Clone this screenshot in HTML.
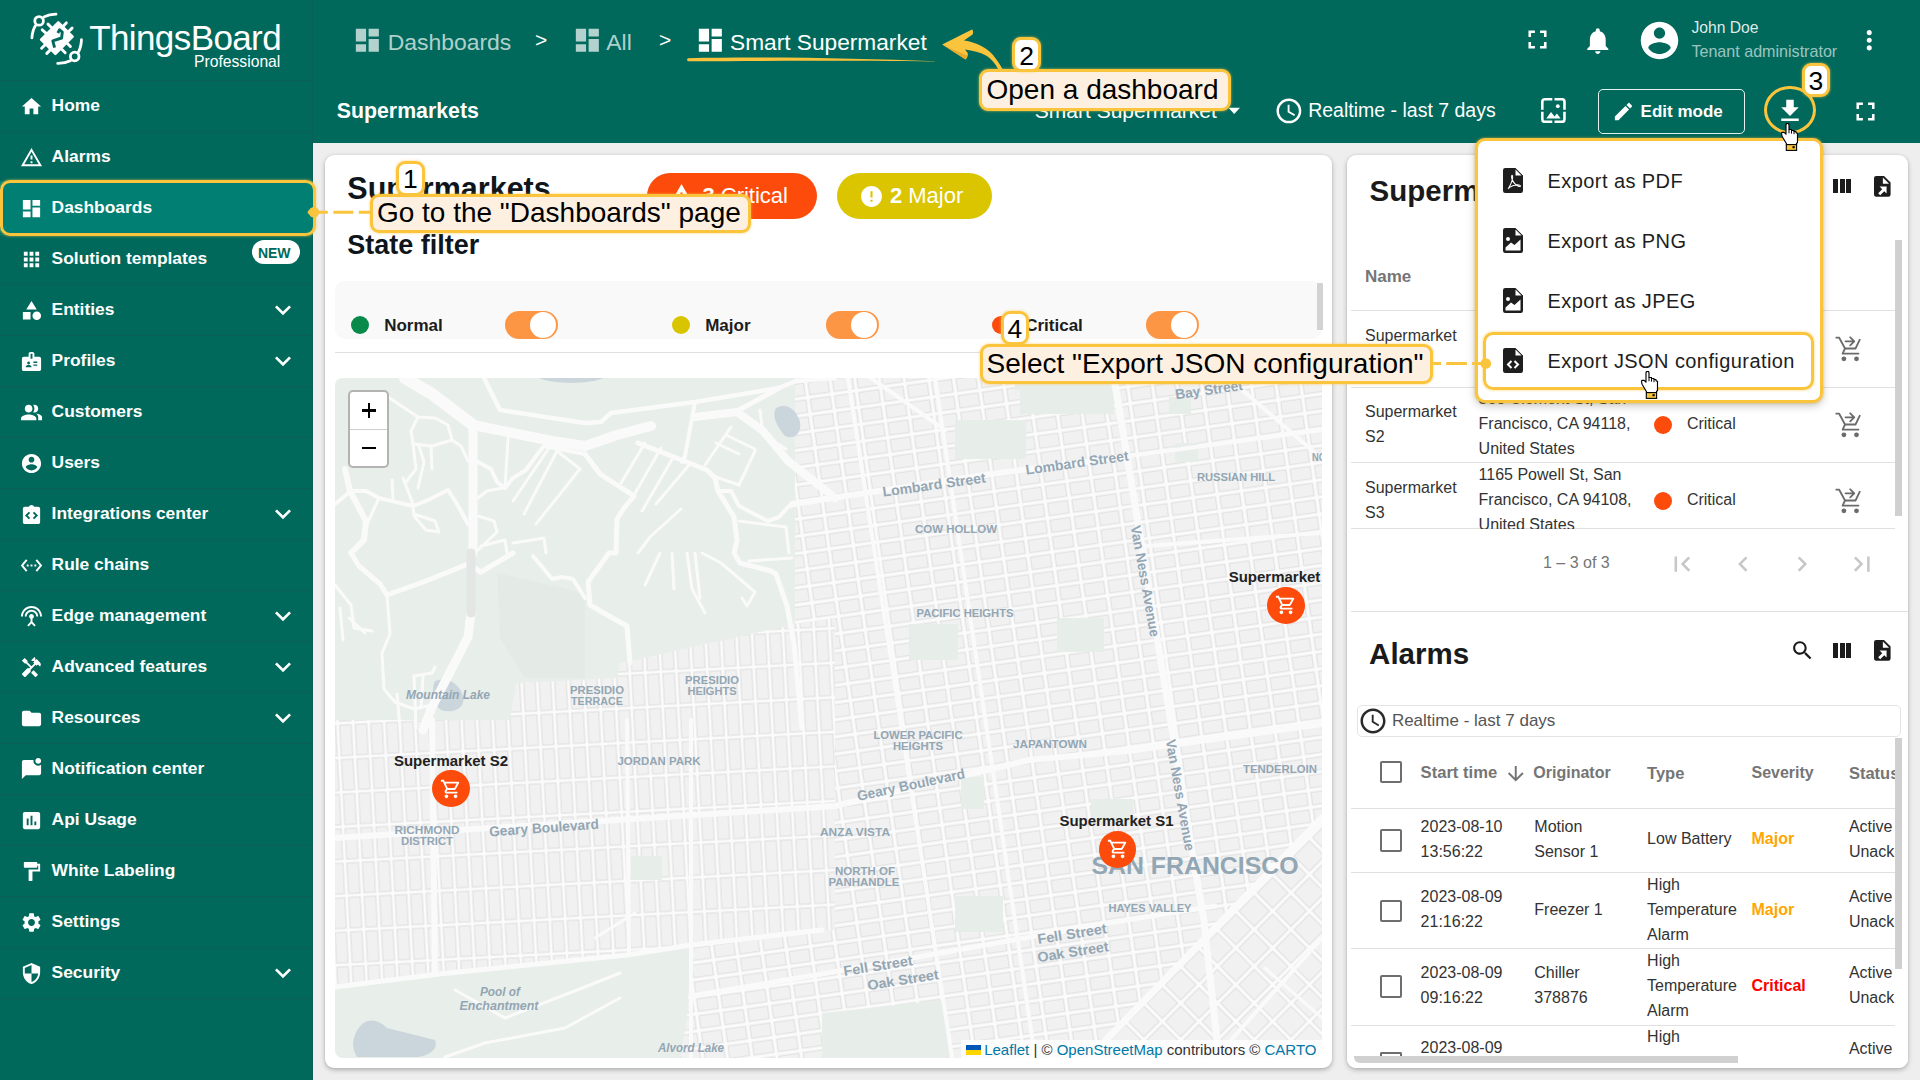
<!DOCTYPE html>
<html><head><meta charset="utf-8">
<style>
*{box-sizing:border-box;margin:0;padding:0}
html,body{width:1920px;height:1080px;overflow:hidden;background:#eeeeee;font-family:"Liberation Sans",sans-serif;position:relative}
.abs{position:absolute}
</style></head><body>

<div class="abs" style="left:0;top:0;width:313px;height:1080px;background:#00695c"></div>
<div class="abs" style="left:312px;top:0;width:1px;height:1080px;background:#0b5f55"></div>
<svg class="abs" style="left:20px;top:5px;width:70px;height:70px" viewBox="0 0 70 70">
<g fill="none" stroke="#fff" stroke-width="2.8" stroke-linecap="round">
<path d="M11.9 32.9 Q12.5 25 15.5 20.6"/><path d="M24.3 11.8 Q29 9.5 36 9.2"/>
<path d="M61.5 34.6 Q61 42.5 58.3 47.4"/><path d="M50.4 55.8 Q45 58.5 37.7 58.4"/>
<circle cx="19.1" cy="15.9" r="4.3"/><circle cx="54.7" cy="51.5" r="4.3"/>
<path d="M28 19.1L31.4 22.5M22.2 24.8L26.2 28.3M46.3 17.9L42.9 21.4M52.1 23.1L48.6 26.5M21.6 43.2L25.1 39.7M26.8 48.4L30.3 44.9M50.4 41.5L46.9 38M45.2 47.8L41.7 44.3" stroke-width="2.9"/>
</g>
<path d="M38.3 17.4L52.6 31.7L35.4 48.9L21.1 34.6Z" fill="#fff" stroke="#fff" stroke-width="2.5" stroke-linejoin="round"/>
<path d="M37.8 28L39.6 24.8L42.3 27L41.6 33L32.8 35.9L34.6 42.6" fill="none" stroke="#00695c" stroke-width="2.9" stroke-linejoin="round"/>
</svg>
<div class="abs" style="left:89.2px;top:19.9px;font-size:35px;line-height:35px;color:#fff;letter-spacing:-0.6px">ThingsBoard</div>
<div class="abs" style="left:194px;top:54.1px;font-size:15.7px;line-height:15.7px;color:#fff">Professional</div>

<div class="abs" style="left:0;top:80px;width:312px;height:1px;background:#0c5f55"></div>
<svg class="abs" style="left:20px;top:94.5px;width:23px;height:23px" viewBox="0 0 24 24"><path fill="#fff" fill-rule="nonzero" d="M10 20v-6h4v6h5v-8h3L12 3 2 12h3v8z"/></svg>
<div class="abs" style="left:51.60px;top:97.37px;font-size:17.4px;line-height:17.4px;color:#fff;font-weight:bold;white-space:nowrap;">Home</div>
<div class="abs" style="left:0;top:131px;width:312px;height:1px;background:#0c5f55"></div>
<svg class="abs" style="left:20px;top:145.5px;width:23px;height:23px" viewBox="0 0 24 24"><path fill="#fff" fill-rule="nonzero" d="M12 5.99L19.53 19H4.47L12 5.99M12 2L1 21h22L12 2zm1 14h-2v2h2v-2zm0-6h-2v4h2v-4z"/></svg>
<div class="abs" style="left:51.60px;top:148.37px;font-size:17.4px;line-height:17.4px;color:#fff;font-weight:bold;white-space:nowrap;">Alarms</div>
<div class="abs" style="left:0;top:182px;width:312px;height:1px;background:#0c5f55"></div>
<div class="abs" style="left:0;top:181px;width:313px;height:54px;background:#007f72"></div>
<svg class="abs" style="left:20px;top:196.5px;width:23px;height:23px" viewBox="0 0 24 24"><path fill="#fff" fill-rule="nonzero" d="M3 13h8V3H3v10zm0 8h8v-6H3v6zm10 0h8V11h-8v10zm0-18v6h8V3h-8z"/></svg>
<div class="abs" style="left:51.60px;top:199.37px;font-size:17.4px;line-height:17.4px;color:#fff;font-weight:bold;white-space:nowrap;">Dashboards</div>
<div class="abs" style="left:0;top:233px;width:312px;height:1px;background:#0c5f55"></div>
<svg class="abs" style="left:20px;top:247.5px;width:23px;height:23px" viewBox="0 0 24 24"><path fill="#fff" fill-rule="nonzero" d="M4 8h4V4H4v4zm6 12h4v-4h-4v4zm-6 0h4v-4H4v4zm0-6h4v-4H4v4zm6 0h4v-4h-4v4zm6-10v4h4V4h-4zm-6 4h4V4h-4v4zm6 6h4v-4h-4v4zm0 6h4v-4h-4v4z"/></svg>
<div class="abs" style="left:51.60px;top:250.37px;font-size:17.4px;line-height:17.4px;color:#fff;font-weight:bold;white-space:nowrap;">Solution templates</div>
<div class="abs" style="left:0;top:284px;width:312px;height:1px;background:#0c5f55"></div>
<svg class="abs" style="left:20px;top:298.5px;width:23px;height:23px" viewBox="0 0 24 24"><path fill="#fff" fill-rule="nonzero" d="M12 2l-5.5 9h11zM17.5 13a4.5 4.5 0 1 0 0 9a4.5 4.5 0 1 0 0-9zM3 13.5h8v8H3z"/></svg>
<div class="abs" style="left:51.60px;top:301.37px;font-size:17.4px;line-height:17.4px;color:#fff;font-weight:bold;white-space:nowrap;">Entities</div>
<svg class="abs" style="left:266.6px;top:293.5px;width:32px;height:32px" viewBox="0 0 24 24"><path fill="#fff" fill-rule="nonzero" d="M16.59 8.59L12 13.17 7.41 8.59 6 10l6 6 6-6z"/></svg>
<div class="abs" style="left:0;top:335px;width:312px;height:1px;background:#0c5f55"></div>
<svg class="abs" style="left:20px;top:349.5px;width:23px;height:23px" viewBox="0 0 24 24"><path fill="#fff" fill-rule="nonzero" d="M20 7h-5V4c0-1.1-.9-2-2-2h-2c-1.1 0-2 .9-2 2v3H4c-1.1 0-2 .9-2 2v11c0 1.1.9 2 2 2h16c1.1 0 2-.9 2-2V9c0-1.1-.9-2-2-2zM9 12c.83 0 1.5.67 1.5 1.5S9.83 15 9 15s-1.5-.67-1.5-1.5S8.17 12 9 12zm3 6H6v-.43c0-.6.36-1.15.92-1.39.64-.28 1.34-.43 2.08-.43s1.44.15 2.08.43c.55.24.92.78.92 1.39V18zm1-9h-2V4h2v5zm5 7.5h-4V15h4v1.5zm0-3h-4V12h4v1.5z"/></svg>
<div class="abs" style="left:51.60px;top:352.37px;font-size:17.4px;line-height:17.4px;color:#fff;font-weight:bold;white-space:nowrap;">Profiles</div>
<svg class="abs" style="left:266.6px;top:344.5px;width:32px;height:32px" viewBox="0 0 24 24"><path fill="#fff" fill-rule="nonzero" d="M16.59 8.59L12 13.17 7.41 8.59 6 10l6 6 6-6z"/></svg>
<div class="abs" style="left:0;top:386px;width:312px;height:1px;background:#0c5f55"></div>
<svg class="abs" style="left:20px;top:400.5px;width:23px;height:23px" viewBox="0 0 24 24"><path fill="#fff" fill-rule="nonzero" d="M16.67 13.13C18.04 14.06 19 15.32 19 17v3h4v-3c0-2.18-3.57-3.47-6.33-3.87zM15 12c2.21 0 4-1.79 4-4s-1.79-4-4-4c-.47 0-.91.1-1.33.24C14.5 5.27 15 6.58 15 8s-.5 2.73-1.33 3.76c.42.14.86.24 1.33.24zm-6 0c2.21 0 4-1.79 4-4s-1.79-4-4-4-4 1.79-4 4 1.79 4 4 4zm0 2c-2.67 0-8 1.34-8 4v2h16v-2c0-2.66-5.33-4-8-4z"/></svg>
<div class="abs" style="left:51.60px;top:403.37px;font-size:17.4px;line-height:17.4px;color:#fff;font-weight:bold;white-space:nowrap;">Customers</div>
<div class="abs" style="left:0;top:437px;width:312px;height:1px;background:#0c5f55"></div>
<svg class="abs" style="left:20px;top:451.5px;width:23px;height:23px" viewBox="0 0 24 24"><path fill="#fff" fill-rule="nonzero" d="M12 2C6.48 2 2 6.48 2 12s4.48 10 10 10 10-4.48 10-10S17.52 2 12 2zm0 3c1.66 0 3 1.34 3 3s-1.34 3-3 3-3-1.34-3-3 1.34-3 3-3zm0 14.2c-2.5 0-4.71-1.28-6-3.22.03-1.99 4-3.08 6-3.08 1.99 0 5.97 1.09 6 3.08-1.29 1.94-3.5 3.22-6 3.22z"/></svg>
<div class="abs" style="left:51.60px;top:454.37px;font-size:17.4px;line-height:17.4px;color:#fff;font-weight:bold;white-space:nowrap;">Users</div>
<div class="abs" style="left:0;top:488px;width:312px;height:1px;background:#0c5f55"></div>
<svg class="abs" style="left:20px;top:502.5px;width:23px;height:23px" viewBox="0 0 24 24"><path fill="#fff" fill-rule="nonzero" d="M19 4h-4.18C14.4 2.84 13.3 2 12 2s-2.4.84-2.82 2H5c-1.1 0-2 .9-2 2v14c0 1.1.9 2 2 2h14c1.1 0 2-.9 2-2V6c0-1.1-.9-2-2-2zM10.6 15.6L9.2 17l-4-4 4-4 1.4 1.4L8 13l2.6 2.6zm4.2 1.4l-1.4-1.4L16 13l-2.6-2.6L14.8 9l4 4-4 4z"/></svg>
<div class="abs" style="left:51.60px;top:505.37px;font-size:17.4px;line-height:17.4px;color:#fff;font-weight:bold;white-space:nowrap;">Integrations center</div>
<svg class="abs" style="left:266.6px;top:497.5px;width:32px;height:32px" viewBox="0 0 24 24"><path fill="#fff" fill-rule="nonzero" d="M16.59 8.59L12 13.17 7.41 8.59 6 10l6 6 6-6z"/></svg>
<div class="abs" style="left:0;top:539px;width:312px;height:1px;background:#0c5f55"></div>
<svg class="abs" style="left:20px;top:553.5px;width:23px;height:23px" viewBox="0 0 24 24"><path fill="#fff" fill-rule="nonzero" d="M7.77 6.76L6.23 5.48.82 12l5.41 6.52 1.54-1.28L3.42 12l4.35-5.24zM7 13h2v-2H7v2zm10-2h-2v2h2v-2zm-6 2h2v-2h-2v2zm6.77-7.52l-1.54 1.28L20.58 12l-4.35 5.24 1.54 1.28L23.18 12l-5.41-6.52z"/></svg>
<div class="abs" style="left:51.60px;top:556.37px;font-size:17.4px;line-height:17.4px;color:#fff;font-weight:bold;white-space:nowrap;">Rule chains</div>
<div class="abs" style="left:0;top:590px;width:312px;height:1px;background:#0c5f55"></div>
<svg class="abs" style="left:20px;top:604.5px;width:23px;height:23px" viewBox="0 0 24 24"><path fill="#fff" fill-rule="nonzero" d="M12 5c-3.87 0-7 3.13-7 7h2c0-2.76 2.24-5 5-5s5 2.24 5 5h2c0-3.87-3.13-7-7-7zm1 9.29c.88-.39 1.5-1.26 1.5-2.29 0-1.38-1.12-2.5-2.5-2.5S9.5 10.62 9.5 12c0 1.02.62 1.9 1.5 2.29v3.3L7.59 21 9 22.41l3-3 3 3L16.41 21 13 17.59v-3.3zM12 1C5.93 1 1 5.93 1 12h2c0-4.97 4.03-9 9-9s9 4.03 9 9h2c0-6.07-4.93-11-11-11z"/></svg>
<div class="abs" style="left:51.60px;top:607.37px;font-size:17.4px;line-height:17.4px;color:#fff;font-weight:bold;white-space:nowrap;">Edge management</div>
<svg class="abs" style="left:266.6px;top:599.5px;width:32px;height:32px" viewBox="0 0 24 24"><path fill="#fff" fill-rule="nonzero" d="M16.59 8.59L12 13.17 7.41 8.59 6 10l6 6 6-6z"/></svg>
<div class="abs" style="left:0;top:641px;width:312px;height:1px;background:#0c5f55"></div>
<svg class="abs" style="left:20px;top:655.5px;width:23px;height:23px" viewBox="0 0 24 24"><path fill="#fff" fill-rule="nonzero" d="M13.78 15.17l-2.01 2.01c-.18.18-.18.47 0 .65l4.13 4.13c.18.18.47.18.65 0l2.01-2.01c.18-.18.18-.47 0-.65l-4.13-4.13c-.18-.18-.47-.18-.65 0zM17.34 10.19l1.41-1.41 2.12 2.12c1.17-1.17 1.17-3.07 0-4.24l-3.54-3.54-1.41 1.41V1.71l-.7-.71-3.54 3.54.71.71h2.83l-1.41 1.41 1.06 1.06-2.89 2.89-4.13-4.13V5.06L4.83 2.04 2 4.87 5.03 7.9h1.41l4.13 4.13-.85.85H7.6l-5.3 5.3c-.39.39-.39 1.02 0 1.41l2.12 2.12c.39.39 1.020.39 1.41 0l5.3-5.3v-2.12l5.15-5.15 1.06 1.05z"/></svg>
<div class="abs" style="left:51.60px;top:658.37px;font-size:17.4px;line-height:17.4px;color:#fff;font-weight:bold;white-space:nowrap;">Advanced features</div>
<svg class="abs" style="left:266.6px;top:650.5px;width:32px;height:32px" viewBox="0 0 24 24"><path fill="#fff" fill-rule="nonzero" d="M16.59 8.59L12 13.17 7.41 8.59 6 10l6 6 6-6z"/></svg>
<div class="abs" style="left:0;top:692px;width:312px;height:1px;background:#0c5f55"></div>
<svg class="abs" style="left:20px;top:706.5px;width:23px;height:23px" viewBox="0 0 24 24"><path fill="#fff" fill-rule="nonzero" d="M10 4H4c-1.1 0-1.99.9-1.99 2L2 18c0 1.1.9 2 2 2h16c1.1 0 2-.9 2-2V8c0-1.1-.9-2-2-2h-8l-2-2z"/></svg>
<div class="abs" style="left:51.60px;top:709.37px;font-size:17.4px;line-height:17.4px;color:#fff;font-weight:bold;white-space:nowrap;">Resources</div>
<svg class="abs" style="left:266.6px;top:701.5px;width:32px;height:32px" viewBox="0 0 24 24"><path fill="#fff" fill-rule="nonzero" d="M16.59 8.59L12 13.17 7.41 8.59 6 10l6 6 6-6z"/></svg>
<div class="abs" style="left:0;top:743px;width:312px;height:1px;background:#0c5f55"></div>
<svg class="abs" style="left:20px;top:757.5px;width:23px;height:23px" viewBox="0 0 24 24"><path fill="#fff" fill-rule="nonzero" d="M22 6.98V16c0 1.1-.9 2-2 2H6l-4 4V4c0-1.1.9-2 2-2h10.1c-.06.32-.1.66-.1 1 0 2.76 2.24 5 5 5 1.13 0 2.16-.39 3-1.02zM16 3c0 1.66 1.34 3 3 3s3-1.34 3-3-1.34-3-3-3-3 1.34-3 3z"/></svg>
<div class="abs" style="left:51.60px;top:760.37px;font-size:17.4px;line-height:17.4px;color:#fff;font-weight:bold;white-space:nowrap;">Notification center</div>
<div class="abs" style="left:0;top:794px;width:312px;height:1px;background:#0c5f55"></div>
<svg class="abs" style="left:20px;top:808.5px;width:23px;height:23px" viewBox="0 0 24 24"><path fill="#fff" fill-rule="nonzero" d="M19 3H5c-1.1 0-2 .9-2 2v14c0 1.1.9 2 2 2h14c1.1 0 2-.9 2-2V5c0-1.1-.9-2-2-2zM9 17H7v-7h2v7zm4 0h-2V7h2v10zm4 0h-2v-4h2v4z"/></svg>
<div class="abs" style="left:51.60px;top:811.37px;font-size:17.4px;line-height:17.4px;color:#fff;font-weight:bold;white-space:nowrap;">Api Usage</div>
<div class="abs" style="left:0;top:845px;width:312px;height:1px;background:#0c5f55"></div>
<svg class="abs" style="left:20px;top:859.5px;width:23px;height:23px" viewBox="0 0 24 24"><path fill="#fff" fill-rule="nonzero" d="M18 4V3c0-.55-.45-1-1-1H5c-.55 0-1 .45-1 1v4c0 .55.45 1 1 1h12c.55 0 1-.45 1-1V6h1v4H9v11c0 .55.45 1 1 1h2c.55 0 1-.45 1-1v-9h8V4h-3z"/></svg>
<div class="abs" style="left:51.60px;top:862.37px;font-size:17.4px;line-height:17.4px;color:#fff;font-weight:bold;white-space:nowrap;">White Labeling</div>
<div class="abs" style="left:0;top:896px;width:312px;height:1px;background:#0c5f55"></div>
<svg class="abs" style="left:20px;top:910.5px;width:23px;height:23px" viewBox="0 0 24 24"><path fill="#fff" fill-rule="nonzero" d="M19.14 12.94c.04-.3.06-.61.06-.94 0-.32-.02-.64-.07-.94l2.03-1.58c.18-.14.23-.41.12-.61l-1.92-3.32c-.12-.22-.37-.29-.59-.22l-2.39.96c-.5-.38-1.030-.7-1.62-.94l-.36-2.54c-.04-.24-.24-.41-.48-.41h-3.84c-.24 0-.43.17-.47.41l-.36 2.54c-.59.24-1.13.57-1.62.94l-2.39-.96c-.22-.08-.47 0-.59.22L2.74 8.87c-.12.21-.08.47.12.61l2.03 1.58c-.05.3-.09.63-.09.94s.02.64.07.94l-2.03 1.58c-.18.14-.23.41-.12.61l1.92 3.32c.12.22.37.29.59.22l2.39-.96c.5.38 1.03.7 1.62.94l.36 2.54c.05.24.24.41.48.41h3.84c.24 0 .44-.17.47-.41l.36-2.54c.59-.24 1.13-.56 1.62-.94l2.39.96c.22.08.47 0 .59-.22l1.92-3.32c.12-.22.07-.47-.12-.61l-2.01-1.58zM12 15.6c-1.98 0-3.6-1.62-3.6-3.6s1.62-3.6 3.6-3.6 3.6 1.62 3.6 3.6-1.62 3.6-3.6 3.6z"/></svg>
<div class="abs" style="left:51.60px;top:913.37px;font-size:17.4px;line-height:17.4px;color:#fff;font-weight:bold;white-space:nowrap;">Settings</div>
<div class="abs" style="left:0;top:947px;width:312px;height:1px;background:#0c5f55"></div>
<svg class="abs" style="left:20px;top:961.5px;width:23px;height:23px" viewBox="0 0 24 24"><path fill="#fff" fill-rule="nonzero" d="M12 1L3 5v6c0 5.55 3.84 10.74 9 12 5.16-1.26 9-6.45 9-12V5l-9-4zm0 10.99h7c-.53 4.12-3.28 7.79-7 8.94V12H5V6.3l7-3.11v8.8z"/></svg>
<div class="abs" style="left:51.60px;top:964.37px;font-size:17.4px;line-height:17.4px;color:#fff;font-weight:bold;white-space:nowrap;">Security</div>
<svg class="abs" style="left:266.6px;top:956.5px;width:32px;height:32px" viewBox="0 0 24 24"><path fill="#fff" fill-rule="nonzero" d="M16.59 8.59L12 13.17 7.41 8.59 6 10l6 6 6-6z"/></svg>
<div class="abs" style="left:0;top:998px;width:312px;height:1px;background:#0c5f55"></div>
<div class="abs" style="left:251.7px;top:239.6px;width:48.5px;height:24.7px;border-radius:12.4px;background:#fff"></div>
<div class="abs" style="left:257.90px;top:245.85px;font-size:14px;line-height:14px;color:#00695c;font-weight:bold;white-space:nowrap;">NEW</div>
<div class="abs" style="left:313px;top:0;width:1607px;height:143px;background:#00695c"></div>
<svg class="abs" style="left:352px;top:25.4px;width:30.7px;height:30.7px" viewBox="0 0 24 24"><path fill="rgba(255,255,255,0.7)" fill-rule="nonzero" d="M3 13h8V3H3v10zm0 8h8v-6H3v6zm10 0h8V11h-8v10zm0-18v6h8V3h-8z"/></svg>
<div class="abs" style="left:387.80px;top:30.52px;font-size:22.9px;line-height:22.9px;color:rgba(255,255,255,0.7);font-weight:normal;white-space:nowrap;">Dashboards</div>
<div class="abs" style="left:535.00px;top:28.62px;font-size:21px;line-height:21px;color:#fff;font-weight:normal;white-space:nowrap;">&gt;</div>
<svg class="abs" style="left:571.7px;top:25.4px;width:30.7px;height:30.7px" viewBox="0 0 24 24"><path fill="rgba(255,255,255,0.7)" fill-rule="nonzero" d="M3 13h8V3H3v10zm0 8h8v-6H3v6zm10 0h8V11h-8v10zm0-18v6h8V3h-8z"/></svg>
<div class="abs" style="left:606.30px;top:30.52px;font-size:22.9px;line-height:22.9px;color:rgba(255,255,255,0.7);font-weight:normal;white-space:nowrap;">All</div>
<div class="abs" style="left:659.00px;top:28.62px;font-size:21px;line-height:21px;color:#fff;font-weight:normal;white-space:nowrap;">&gt;</div>
<svg class="abs" style="left:695.3px;top:24.8px;width:30.7px;height:30.7px" viewBox="0 0 24 24"><path fill="#fff" fill-rule="nonzero" d="M3 13h8V3H3v10zm0 8h8v-6H3v6zm10 0h8V11h-8v10zm0-18v6h8V3h-8z"/></svg>
<div class="abs" style="left:730.00px;top:30.58px;font-size:22.7px;line-height:22.7px;color:#fff;font-weight:normal;white-space:nowrap;">Smart Supermarket</div>
<svg class="abs" style="left:680px;top:50px;width:270px;height:20px" viewBox="0 0 270 20"><path d="M8 8.2 C 90 6.5, 180 8.5, 255 11.2 L 255 11.6 C 180 10.5, 90 10.8, 8 11.2 Q 6 9.7 8 8.2z" fill="#f9c23c"/></svg>
<div class="abs" style="left:336.80px;top:100.77px;font-size:21.3px;line-height:21.3px;color:#fff;font-weight:bold;white-space:nowrap;">Supermarkets</div>
<div class="abs" style="left:1034.80px;top:99.72px;font-size:21px;line-height:21px;color:#fff;font-weight:normal;white-space:nowrap;">Smart Supermarket</div>
<svg class="abs" style="left:1228px;top:107px;width:13px;height:8px" viewBox="0 0 13 8"><path d="M0.5 0.8H12L6.2 7z" fill="#fff"/></svg>
<svg class="abs" style="left:1273.8px;top:96.1px;width:29.8px;height:29.8px" viewBox="0 0 24 24"><path fill="#fff" fill-rule="nonzero" d="M11.99 2C6.47 2 2 6.48 2 12s4.47 10 9.99 10C17.52 22 22 17.52 22 12S17.52 2 11.99 2zM12 20c-4.42 0-8-3.58-8-8s3.58-8 8-8 8 3.58 8 8-3.58 8-8 8zm.5-13H11v6l5.25 3.15.75-1.23-4.5-2.67z"/></svg>
<div class="abs" style="left:1308.20px;top:101.19px;font-size:19.5px;line-height:19.5px;color:#fff;font-weight:normal;white-space:nowrap;">Realtime - last 7 days</div>
<svg class="abs" style="left:1540.6px;top:98.3px;width:25px;height:25.2px" viewBox="0 0 25 25.2"><g fill="none" stroke="#fff" stroke-width="2.6"><path d="M11.3 1.3H4Q1.3 1.3 1.3 4V11.7M13.5 1.3H21Q23.5 1.3 23.5 4V11.7M1.3 13.7V21.2Q1.3 23.9 4 23.9H11.3M23.5 13.7V21.2Q23.5 23.9 21 23.9H13.5"/></g><circle cx="16.8" cy="8.2" r="1.9" fill="#fff"/><path d="M5.3 20.6L10 13.9L13.6 18.4L15.9 15.6L19.6 20.6Z" fill="#fff"/></svg>
<div class="abs" style="left:1598px;top:89.2px;width:147px;height:44.4px;border:1px solid rgba(255,255,255,.9);border-radius:5px"></div>
<svg class="abs" style="left:1612.1px;top:99.7px;width:23px;height:23px" viewBox="0 0 24 24"><path fill="#fff" fill-rule="nonzero" d="M3 17.25V21h3.75L17.81 9.94l-3.75-3.75L3 17.25zM20.71 7.04c.39-.39.39-1.02 0-1.41l-2.34-2.34c-.39-.39-1.02-.39-1.41 0l-1.83 1.83 3.75 3.75 1.83-1.83z"/></svg>
<div class="abs" style="left:1640.60px;top:102.61px;font-size:17px;line-height:17px;color:#fff;font-weight:bold;white-space:nowrap;">Edit mode</div>
<svg class="abs" style="left:1774.7px;top:96px;width:30px;height:30px" viewBox="0 0 24 24"><path fill="#fff" fill-rule="nonzero" d="M19 9h-4V3H9v6H5l7 7 7-7zM5 18v2h14v-2H5z"/></svg>
<svg class="abs" style="left:1849.5px;top:95.5px;width:31px;height:31px" viewBox="0 0 24 24"><path fill="#fff" fill-rule="nonzero" d="M7 14H5v5h5v-2H7v-3zm-2-4h2V7h3V5H5v5zm12 7h-3v2h5v-5h-2v3zM14 5v2h3v3h2V5h-5z"/></svg>
<svg class="abs" style="left:1521.8px;top:24.4px;width:31px;height:31px" viewBox="0 0 24 24"><path fill="#fff" fill-rule="nonzero" d="M7 14H5v5h5v-2H7v-3zm-2-4h2V7h3V5H5v5zm12 7h-3v2h5v-5h-2v3zM14 5v2h3v3h2V5h-5z"/></svg>
<svg class="abs" style="left:1581.5px;top:24.6px;width:31.6px;height:31.6px" viewBox="0 0 24 24"><path fill="#fff" fill-rule="nonzero" d="M12 22c1.1 0 2-.9 2-2h-4c0 1.1.89 2 2 2zm6-6v-5c0-3.07-1.64-5.64-4.5-6.32V4c0-.83-.67-1.5-1.5-1.5s-1.5.67-1.5 1.5v.68C7.63 5.36 6 7.92 6 11v5l-2 2v1h16v-1l-2-2z"/></svg>
<svg class="abs" style="left:1637.2px;top:18px;width:45px;height:45px" viewBox="0 0 24 24"><path fill="#fff" fill-rule="nonzero" d="M12 2C6.48 2 2 6.48 2 12s4.48 10 10 10 10-4.48 10-10S17.52 2 12 2zm0 3c1.66 0 3 1.34 3 3s-1.34 3-3 3-3-1.34-3-3 1.34-3 3-3zm0 14.2c-2.5 0-4.71-1.28-6-3.22.03-1.99 4-3.08 6-3.08 1.99 0 5.97 1.09 6 3.08-1.29 1.94-3.5 3.22-6 3.22z"/></svg>
<div class="abs" style="left:1691.40px;top:19.71px;font-size:15.7px;line-height:15.7px;color:rgba(255,255,255,0.88);font-weight:normal;white-space:nowrap;">John Doe</div>
<div class="abs" style="left:1691.40px;top:43.07px;font-size:16.1px;line-height:16.1px;color:rgba(255,255,255,0.62);font-weight:normal;white-space:nowrap;">Tenant administrator</div>
<svg class="abs" style="left:1853.8px;top:24.8px;width:30.5px;height:30.5px" viewBox="0 0 24 24"><path fill="#fff" fill-rule="nonzero" d="M12 8c1.1 0 2-.9 2-2s-.9-2-2-2-2 .9-2 2 .9 2 2 2zm0 2c-1.1 0-2 .9-2 2s.9 2 2 2 2-.9 2-2-.9-2-2-2zm0 6c-1.1 0-2 .9-2 2s.9 2 2 2 2-.9 2-2-.9-2-2-2z"/></svg>
<div class="abs" style="left:325px;top:155px;width:1007px;height:913px;background:#fff;border-radius:9px;box-shadow:0 2px 5px rgba(0,0,0,.26),0 0 2px rgba(0,0,0,.10)"></div>
<div class="abs" style="left:1347px;top:155px;width:561px;height:913px;background:#fff;border-radius:9px;box-shadow:0 2px 5px rgba(0,0,0,.26),0 0 2px rgba(0,0,0,.10)"></div>
<div class="abs" style="left:347.30px;top:173.38px;font-size:30.5px;line-height:30.5px;color:#0e161b;font-weight:bold;white-space:nowrap;">Supermarkets</div>
<div class="abs" style="left:646.6px;top:173.1px;width:170.2px;height:45.6px;border-radius:23px;background:#fd4b0b"></div>
<svg class="abs" style="left:669.2px;top:182.3px;width:25px;height:25px" viewBox="0 0 24 24"><path fill="#fff" fill-rule="nonzero" d="M1 21h22L12 2 1 21zm12-3h-2v-2h2v2zm0-4h-2v-4h2v4z"/></svg>
<div class="abs" style="left:702.40px;top:184.88px;font-size:22px;line-height:22px;color:#fff;font-weight:normal;white-space:nowrap;"><b>3</b> Critical</div>
<div class="abs" style="left:836.9px;top:173.1px;width:155.1px;height:45.6px;border-radius:23px;background:#dac500"></div>
<svg class="abs" style="left:859.2px;top:184.2px;width:25px;height:25px" viewBox="0 0 24 24"><path fill="#fff" fill-rule="nonzero" d="M12 2C6.48 2 2 6.48 2 12s4.48 10 10 10 10-4.48 10-10S17.52 2 12 2zm1 15h-2v-2h2v2zm0-4h-2V7h2v6z"/></svg>
<div class="abs" style="left:889.90px;top:184.88px;font-size:22px;line-height:22px;color:#fff;font-weight:normal;white-space:nowrap;"><b>2</b> Major</div>
<div class="abs" style="left:347.30px;top:231.84px;font-size:27px;line-height:27px;color:#0e161b;font-weight:bold;white-space:nowrap;">State filter</div>
<div class="abs" style="left:335px;top:281px;width:987px;height:58px;background:#f9f9f9;border-radius:10px"></div>
<div class="abs" style="left:1317px;top:283px;width:6px;height:47px;background:#d3d3d3"></div>
<div class="abs" style="left:335px;top:352px;width:987px;height:1px;background:#e0e0e0"></div>
<div class="abs" style="left:351px;top:316px;width:18px;height:18px;border-radius:9px;background:#088a4b"></div>
<div class="abs" style="left:384.20px;top:316.61px;font-size:17px;line-height:17px;color:#1c1c1c;font-weight:bold;white-space:nowrap;">Normal</div>
<div class="abs" style="left:505px;top:310.5px;width:53px;height:28.5px;border-radius:14.25px;background:#fd9644"></div>
<div class="abs" style="left:530px;top:312.2px;width:25.5px;height:25.5px;border-radius:13px;background:#fff"></div>
<div class="abs" style="left:672px;top:316px;width:18px;height:18px;border-radius:9px;background:#d9c400"></div>
<div class="abs" style="left:705.20px;top:316.61px;font-size:17px;line-height:17px;color:#1c1c1c;font-weight:bold;white-space:nowrap;">Major</div>
<div class="abs" style="left:826px;top:310.5px;width:53px;height:28.5px;border-radius:14.25px;background:#fd9644"></div>
<div class="abs" style="left:851px;top:312.2px;width:25.5px;height:25.5px;border-radius:13px;background:#fff"></div>
<div class="abs" style="left:992px;top:316px;width:18px;height:18px;border-radius:9px;background:#fd4b0b"></div>
<div class="abs" style="left:1025.20px;top:316.61px;font-size:17px;line-height:17px;color:#1c1c1c;font-weight:bold;white-space:nowrap;">Critical</div>
<div class="abs" style="left:1146px;top:310.5px;width:53px;height:28.5px;border-radius:14.25px;background:#fd9644"></div>
<div class="abs" style="left:1171px;top:312.2px;width:25.5px;height:25.5px;border-radius:13px;background:#fff"></div>
<svg class="abs" style="left:335px;top:378px;width:987px;height:680px" viewBox="0 0 987 680" font-family="Liberation Sans, sans-serif">
<defs>
<pattern id="g1" width="24.5" height="17" patternUnits="userSpaceOnUse" patternTransform="rotate(-8)">
<rect width="24.5" height="17" fill="#fbfbfb"/><rect x="2.2" y="2.2" width="20.1" height="12.6" fill="#f1f1f1" stroke="#e0e0e0" stroke-width="1.1"/></pattern>
<pattern id="g2" width="15.5" height="34.5" patternUnits="userSpaceOnUse" patternTransform="rotate(-3)">
<rect width="15.5" height="34.5" fill="#fbfbfb"/><rect x="2" y="2" width="11.5" height="30.5" fill="#f1f1f1" stroke="#e0e0e0" stroke-width="1.1"/></pattern>
<pattern id="g3" width="26" height="26" patternUnits="userSpaceOnUse" patternTransform="rotate(45)">
<rect width="26" height="26" fill="#fbfbfb"/><rect x="2.2" y="2.2" width="21.6" height="21.6" fill="#f1f1f1" stroke="#e0e0e0" stroke-width="1.1"/></pattern>
<clipPath id="mc"><rect width="987" height="680" rx="8"/></clipPath>
</defs>
<g clip-path="url(#mc)">
<rect width="987" height="680" fill="url(#g1)"/>
<polygon points="0,342 175,342 181,305 282,300 285,285 460,246 500,240 500,552 356,567 0,609" fill="url(#g2)"/>
<polygon points="987,440 772,661 758,680 987,680" fill="url(#g3)"/>
<polygon points="0,0 460,0 460,246 285,285 282,300 181,305 175,342 0,342" fill="#e8eee9"/>
<polygon points="0,609 104,596 292,577 356,567 352,640 345,680 0,680" fill="#e8eee9"/>
<rect x="620" y="42" width="71" height="39" fill="#e7eee9"/><rect x="685" y="6" width="94" height="30" fill="#e7eee9"/><rect x="574" y="246" width="49" height="36" fill="#e7eee9"/><rect x="722" y="240" width="47" height="34" fill="#e7eee9"/><rect x="834" y="19" width="22" height="17" fill="#e7eee9"/><rect x="840" y="65" width="23" height="19" fill="#e7eee9"/><rect x="620" y="518" width="48" height="36" fill="#e7eee9"/><rect x="626" y="399" width="23" height="32" fill="#e7eee9"/><rect x="756" y="421" width="42" height="26" fill="#e7eee9"/><rect x="296" y="478" width="31" height="24" fill="#e7eee9"/><rect x="680" y="2" width="60" height="10" fill="#e7eee9"/><polygon points="487,635 610,622 615,680 487,680" fill="#e7eee9"/>
<path d="M100 303 C112 298 124 305 128 318 C131 330 118 336 106 332 C98 326 96 312 100 303z" fill="#cbd5dc"/><path d="M441 30 C452 24 462 32 465 44 C467 56 458 62 450 58 C444 50 436 40 441 30z" fill="#cbd5dc"/><path d="M204 0 L269 0 C255 6 220 7 204 0z" fill="#cbd5dc"/><path d="M19 660 C25 640 40 638 52 650 L100 662 C104 672 92 679 80 679 L22 679 C18 672 17 666 19 660z" fill="#cbd5dc"/>
<polygon points="162,195 250,215 250,300 190,300 165,260" fill="#e4ebe6"/><polyline points="70,0 97,16 138,47" fill="none" stroke="#fafafa" stroke-width="12" stroke-linecap="round" stroke-linejoin="round"/><polyline points="138,47 217,63 250,68 282,57 316,48" fill="none" stroke="#fafafa" stroke-width="10" stroke-linecap="round" stroke-linejoin="round"/><polyline points="360,39 402,34 428,53 453,83 500,120" fill="none" stroke="#fafafa" stroke-width="8" stroke-linecap="round" stroke-linejoin="round"/><polyline points="138,47 138,175" fill="none" stroke="#fafafa" stroke-width="9" stroke-linecap="round" stroke-linejoin="round"/><polyline points="136,235 133,259 113,298 97,329 88,352" fill="none" stroke="#fafafa" stroke-width="9" stroke-linecap="round" stroke-linejoin="round"/><polyline points="149,0 165,32 250,45 266,44 276,35 360,24 444,10 461,3 500,0" fill="none" stroke="#fafafa" stroke-width="4.5" stroke-linecap="round" stroke-linejoin="round"/><polyline points="444,10 404,32" fill="none" stroke="#fafafa" stroke-width="5" stroke-linecap="round" stroke-linejoin="round"/><polyline points="360,24 350,78 347,84" fill="none" stroke="#fafafa" stroke-width="4" stroke-linecap="round" stroke-linejoin="round"/><polyline points="250,76 265,96 299,118 289,130 282,141 281,175 274,175 253,204 255,227 274,238 292,248 295,285" fill="none" stroke="#fafafa" stroke-width="5" stroke-linecap="round" stroke-linejoin="round"/><polyline points="303,65 372,92 380,100 383,113 399,139 402,162 399,175 405,185 436,193 441,196 452,228 459,266 467,350" fill="none" stroke="#fafafa" stroke-width="5" stroke-linecap="round" stroke-linejoin="round"/><polyline points="16,175 24,188 45,206 52,217 91,203 133,186 146,194 178,175" fill="none" stroke="#fafafa" stroke-width="5" stroke-linecap="round" stroke-linejoin="round"/><polyline points="0,126 16,113 31,113 44,120 78,128 91,123 113,112 122,126 133,146" fill="none" stroke="#fafafa" stroke-width="4" stroke-linecap="round" stroke-linejoin="round"/><polyline points="10,91 15,113 31,143 29,162 16,175" fill="none" stroke="#fafafa" stroke-width="6" stroke-linecap="round" stroke-linejoin="round"/><polyline points="141,83 156,91 162,104 170,110 178,100 191,92 201,78 209,68 250,76" fill="none" stroke="#fafafa" stroke-width="4" stroke-linecap="round" stroke-linejoin="round"/><polyline points="384,113 396,113 404,128 433,143 444,139 454,128 500,120" fill="none" stroke="#fafafa" stroke-width="4" stroke-linecap="round" stroke-linejoin="round"/><polyline points="198,178 217,201 227,199 238,201 250,220" fill="none" stroke="#fafafa" stroke-width="4" stroke-linecap="round" stroke-linejoin="round"/><polyline points="136,175 136,235" fill="none" stroke="#e3e6e4" stroke-width="9" stroke-linecap="round" stroke-linejoin="round"/><polyline points="53,19 83,39 100,40 113,47 117,62 126,68 133,83" fill="none" stroke="#fafafa" stroke-width="3" stroke-linecap="round" stroke-linejoin="round"/><polyline points="83,39 76,53 78,66 81,91 71,104" fill="none" stroke="#fafafa" stroke-width="3" stroke-linecap="round" stroke-linejoin="round"/><polyline points="78,66 97,68 117,62" fill="none" stroke="#fafafa" stroke-width="3" stroke-linecap="round" stroke-linejoin="round"/><polyline points="96,68 97,91" fill="none" stroke="#fafafa" stroke-width="3" stroke-linecap="round" stroke-linejoin="round"/><polyline points="84,68 89,84 83,110" fill="none" stroke="#fafafa" stroke-width="3" stroke-linecap="round" stroke-linejoin="round"/><polyline points="44,120 32,146" fill="none" stroke="#fafafa" stroke-width="3" stroke-linecap="round" stroke-linejoin="round"/><polyline points="78,128 79,138 91,152 104,154 100,143 79,136" fill="none" stroke="#fafafa" stroke-width="3" stroke-linecap="round" stroke-linejoin="round"/><polyline points="57,102 58,120" fill="none" stroke="#fafafa" stroke-width="3" stroke-linecap="round" stroke-linejoin="round"/><polyline points="68,100 78,126" fill="none" stroke="#fafafa" stroke-width="3" stroke-linecap="round" stroke-linejoin="round"/><polyline points="173,60 170,110" fill="none" stroke="#fafafa" stroke-width="3" stroke-linecap="round" stroke-linejoin="round"/><polyline points="143,120 152,113 168,110" fill="none" stroke="#fafafa" stroke-width="3" stroke-linecap="round" stroke-linejoin="round"/><polyline points="143,138 159,143 162,154 143,172" fill="none" stroke="#fafafa" stroke-width="3" stroke-linecap="round" stroke-linejoin="round"/><polyline points="178,123 214,70" fill="none" stroke="#fafafa" stroke-width="3" stroke-linecap="round" stroke-linejoin="round"/><polyline points="189,136 222,73" fill="none" stroke="#fafafa" stroke-width="3" stroke-linecap="round" stroke-linejoin="round"/><polyline points="201,146 245,91" fill="none" stroke="#fafafa" stroke-width="3" stroke-linecap="round" stroke-linejoin="round"/><polyline points="222,73 245,91" fill="none" stroke="#fafafa" stroke-width="3" stroke-linecap="round" stroke-linejoin="round"/><polyline points="178,165 209,160 211,175" fill="none" stroke="#fafafa" stroke-width="3" stroke-linecap="round" stroke-linejoin="round"/><polyline points="146,168 170,162 172,175" fill="none" stroke="#fafafa" stroke-width="3" stroke-linecap="round" stroke-linejoin="round"/><polyline points="286,105 310,65" fill="none" stroke="#fafafa" stroke-width="3" stroke-linecap="round" stroke-linejoin="round"/><polyline points="299,117 326,70" fill="none" stroke="#fafafa" stroke-width="3" stroke-linecap="round" stroke-linejoin="round"/><polyline points="307,133 339,78" fill="none" stroke="#fafafa" stroke-width="3" stroke-linecap="round" stroke-linejoin="round"/><polyline points="321,126 354,87" fill="none" stroke="#fafafa" stroke-width="3" stroke-linecap="round" stroke-linejoin="round"/><polyline points="370,87 383,68 396,49" fill="none" stroke="#fafafa" stroke-width="3" stroke-linecap="round" stroke-linejoin="round"/><polyline points="381,65 404,76" fill="none" stroke="#fafafa" stroke-width="3" stroke-linecap="round" stroke-linejoin="round"/><polyline points="391,57 420,71" fill="none" stroke="#fafafa" stroke-width="3" stroke-linecap="round" stroke-linejoin="round"/><polyline points="420,73 404,107" fill="none" stroke="#fafafa" stroke-width="3" stroke-linecap="round" stroke-linejoin="round"/><polyline points="381,99 404,107" fill="none" stroke="#fafafa" stroke-width="3" stroke-linecap="round" stroke-linejoin="round"/><polyline points="404,143 451,149 454,175" fill="none" stroke="#fafafa" stroke-width="3" stroke-linecap="round" stroke-linejoin="round"/><polyline points="425,32 428,57 451,71" fill="none" stroke="#fafafa" stroke-width="3" stroke-linecap="round" stroke-linejoin="round"/><polyline points="346,131 315,159 303,175" fill="none" stroke="#fafafa" stroke-width="3" stroke-linecap="round" stroke-linejoin="round"/><polyline points="325,175 310,207" fill="none" stroke="#fafafa" stroke-width="3" stroke-linecap="round" stroke-linejoin="round"/><polyline points="337,175 339,211" fill="none" stroke="#fafafa" stroke-width="3" stroke-linecap="round" stroke-linejoin="round"/><polyline points="352,175 357,211 370,235" fill="none" stroke="#fafafa" stroke-width="3" stroke-linecap="round" stroke-linejoin="round"/><polyline points="360,175 365,220" fill="none" stroke="#fafafa" stroke-width="3" stroke-linecap="round" stroke-linejoin="round"/><polyline points="367,175 386,185 420,214 412,228 407,220" fill="none" stroke="#fafafa" stroke-width="3" stroke-linecap="round" stroke-linejoin="round"/><polyline points="414,183 457,180" fill="none" stroke="#fafafa" stroke-width="3" stroke-linecap="round" stroke-linejoin="round"/><polyline points="52,217 55,256 47,275 49,311 60,324 79,331 97,327" fill="none" stroke="#fafafa" stroke-width="3" stroke-linecap="round" stroke-linejoin="round"/><polyline points="79,298 97,295 100,289" fill="none" stroke="#fafafa" stroke-width="3" stroke-linecap="round" stroke-linejoin="round"/><polyline points="79,298 81,350" fill="none" stroke="#fafafa" stroke-width="3" stroke-linecap="round" stroke-linejoin="round"/><polyline points="88,298 86,330" fill="none" stroke="#fafafa" stroke-width="3" stroke-linecap="round" stroke-linejoin="round"/><polyline points="62,316 65,350" fill="none" stroke="#fafafa" stroke-width="3" stroke-linecap="round" stroke-linejoin="round"/><polyline points="0,207 16,227 19,250 37,253" fill="none" stroke="#fafafa" stroke-width="3" stroke-linecap="round" stroke-linejoin="round"/><polyline points="5,230 8,262" fill="none" stroke="#fafafa" stroke-width="3" stroke-linecap="round" stroke-linejoin="round"/><polyline points="14,240 30,255" fill="none" stroke="#fafafa" stroke-width="3" stroke-linecap="round" stroke-linejoin="round"/><polyline points="457,126 649,97 795,78" fill="none" stroke="#fafafa" stroke-width="6" stroke-linecap="round" stroke-linejoin="round"/><polyline points="795,78 987,52" fill="none" stroke="#fafafa" stroke-width="4" stroke-linecap="round" stroke-linejoin="round"/><polyline points="779,0 837,350 869,544 884,680" fill="none" stroke="#fafafa" stroke-width="7" stroke-linecap="round" stroke-linejoin="round"/><polyline points="0,460 500,428 694,382 792,373 987,346" fill="none" stroke="#fafafa" stroke-width="6" stroke-linecap="round" stroke-linejoin="round"/><polyline points="97,342 100,596" fill="none" stroke="#fafafa" stroke-width="6" stroke-linecap="round" stroke-linejoin="round"/><polyline points="0,609 104,596 292,577 356,567 487,552" fill="none" stroke="#fafafa" stroke-width="5" stroke-linecap="round" stroke-linejoin="round"/><polyline points="292,342 294,577" fill="none" stroke="#fafafa" stroke-width="4" stroke-linecap="round" stroke-linejoin="round"/><polyline points="356,342 356,679" fill="none" stroke="#fafafa" stroke-width="4" stroke-linecap="round" stroke-linejoin="round"/><polyline points="513,0 617,679" fill="none" stroke="#fafafa" stroke-width="4" stroke-linecap="round" stroke-linejoin="round"/><polyline points="600,0 700,679" fill="none" stroke="#fafafa" stroke-width="4" stroke-linecap="round" stroke-linejoin="round"/><polyline points="356,618 487,596 779,544 880,528" fill="none" stroke="#fafafa" stroke-width="5" stroke-linecap="round" stroke-linejoin="round"/><polyline points="987,440 772,661 758,680" fill="none" stroke="#fafafa" stroke-width="7" stroke-linecap="round" stroke-linejoin="round"/><polyline points="905,10 987,81" fill="none" stroke="#fafafa" stroke-width="4" stroke-linecap="round" stroke-linejoin="round"/><polyline points="536,0 610,52" fill="none" stroke="#fafafa" stroke-width="4" stroke-linecap="round" stroke-linejoin="round"/><polyline points="811,168 987,155" fill="none" stroke="#fafafa" stroke-width="4" stroke-linecap="round" stroke-linejoin="round"/><polyline points="987,560 880,680" fill="none" stroke="#fafafa" stroke-width="4" stroke-linecap="round" stroke-linejoin="round"/><polyline points="930,590 987,640" fill="none" stroke="#fafafa" stroke-width="3" stroke-linecap="round" stroke-linejoin="round"/><polyline points="120,612 170,640 260,605 285,595" fill="none" stroke="#fafafa" stroke-width="3" stroke-linecap="round" stroke-linejoin="round"/><polyline points="110,679 150,665 230,650 285,620" fill="none" stroke="#fafafa" stroke-width="3" stroke-linecap="round" stroke-linejoin="round"/><polyline points="260,560 300,535" fill="none" stroke="#fafafa" stroke-width="3" stroke-linecap="round" stroke-linejoin="round"/>
<text x="113" y="321.3" font-size="13" text-anchor="middle" fill="#93a6b4" font-weight="bold" font-style="italic" textLength="84" lengthAdjust="spacingAndGlyphs">Mountain Lake</text><text x="262" y="316.1" font-size="11.5" text-anchor="middle" fill="#93a6b4" font-weight="bold" textLength="54" lengthAdjust="spacingAndGlyphs">PRESIDIO</text><text x="262" y="327.1" font-size="11.5" text-anchor="middle" fill="#93a6b4" font-weight="bold" textLength="52" lengthAdjust="spacingAndGlyphs">TERRACE</text><text x="377" y="306.1" font-size="11.5" text-anchor="middle" fill="#93a6b4" font-weight="bold" textLength="54" lengthAdjust="spacingAndGlyphs">PRESIDIO</text><text x="377" y="317.1" font-size="11.5" text-anchor="middle" fill="#93a6b4" font-weight="bold" textLength="49" lengthAdjust="spacingAndGlyphs">HEIGHTS</text><text x="621" y="155.1" font-size="11.5" text-anchor="middle" fill="#93a6b4" font-weight="bold" textLength="82" lengthAdjust="spacingAndGlyphs">COW HOLLOW</text><text x="630" y="239.1" font-size="11.5" text-anchor="middle" fill="#93a6b4" font-weight="bold" textLength="97" lengthAdjust="spacingAndGlyphs">PACIFIC HEIGHTS</text><text x="901" y="103.1" font-size="11.5" text-anchor="middle" fill="#93a6b4" font-weight="bold" textLength="78" lengthAdjust="spacingAndGlyphs">RUSSIAN HILL</text><text x="984" y="83.1" font-size="11.5" text-anchor="middle" fill="#93a6b4" font-weight="bold" textLength="14" lengthAdjust="spacingAndGlyphs">NO</text><text x="599" y="111.6" font-size="14" text-anchor="middle" fill="#93a6b4" font-weight="bold" textLength="104" lengthAdjust="spacingAndGlyphs" transform="rotate(-8 599 107)">Lombard Street</text><text x="742" y="89.6" font-size="14" text-anchor="middle" fill="#93a6b4" font-weight="bold" textLength="104" lengthAdjust="spacingAndGlyphs" transform="rotate(-8 742 85)">Lombard Street</text><text x="874" y="16.6" font-size="14" text-anchor="middle" fill="#93a6b4" font-weight="bold" textLength="68" lengthAdjust="spacingAndGlyphs" transform="rotate(-8 874 12)">Bay Street</text><text x="810" y="207.6" font-size="14" text-anchor="middle" fill="#93a6b4" font-weight="bold" textLength="113" lengthAdjust="spacingAndGlyphs" transform="rotate(80 810 203)">Van Ness Avenue</text><text x="92" y="456.1" font-size="11.5" text-anchor="middle" fill="#93a6b4" font-weight="bold" textLength="65" lengthAdjust="spacingAndGlyphs">RICHMOND</text><text x="92" y="467.1" font-size="11.5" text-anchor="middle" fill="#93a6b4" font-weight="bold" textLength="52" lengthAdjust="spacingAndGlyphs">DISTRICT</text><text x="209" y="454.6" font-size="14" text-anchor="middle" fill="#93a6b4" font-weight="bold" textLength="110" lengthAdjust="spacingAndGlyphs" transform="rotate(-4 209 450)">Geary Boulevard</text><text x="324" y="387.1" font-size="11.5" text-anchor="middle" fill="#93a6b4" font-weight="bold" textLength="83" lengthAdjust="spacingAndGlyphs">JORDAN PARK</text><text x="165" y="618.3" font-size="13" text-anchor="middle" fill="#93a6b4" font-weight="bold" font-style="italic" textLength="40" lengthAdjust="spacingAndGlyphs">Pool of</text><text x="164" y="632.3" font-size="13" text-anchor="middle" fill="#93a6b4" font-weight="bold" font-style="italic" textLength="79" lengthAdjust="spacingAndGlyphs">Enchantment</text><text x="356" y="674.3" font-size="13" text-anchor="middle" fill="#93a6b4" font-weight="bold" font-style="italic" textLength="66" lengthAdjust="spacingAndGlyphs">Alvord Lake</text><text x="583" y="361.1" font-size="11.5" text-anchor="middle" fill="#93a6b4" font-weight="bold" textLength="89" lengthAdjust="spacingAndGlyphs">LOWER PACIFIC</text><text x="583" y="372.1" font-size="11.5" text-anchor="middle" fill="#93a6b4" font-weight="bold" textLength="50" lengthAdjust="spacingAndGlyphs">HEIGHTS</text><text x="715" y="370.1" font-size="11.5" text-anchor="middle" fill="#93a6b4" font-weight="bold" textLength="74" lengthAdjust="spacingAndGlyphs">JAPANTOWN</text><text x="945" y="395.1" font-size="11.5" text-anchor="middle" fill="#93a6b4" font-weight="bold" textLength="74" lengthAdjust="spacingAndGlyphs">TENDERLOIN</text><text x="576" y="411.6" font-size="14" text-anchor="middle" fill="#93a6b4" font-weight="bold" textLength="110" lengthAdjust="spacingAndGlyphs" transform="rotate(-12 576 407)">Geary Boulevard</text><text x="520" y="458.1" font-size="11.5" text-anchor="middle" fill="#93a6b4" font-weight="bold" textLength="70" lengthAdjust="spacingAndGlyphs">ANZA VISTA</text><text x="530" y="497.1" font-size="11.5" text-anchor="middle" fill="#93a6b4" font-weight="bold" textLength="60" lengthAdjust="spacingAndGlyphs">NORTH OF</text><text x="529" y="508.1" font-size="11.5" text-anchor="middle" fill="#93a6b4" font-weight="bold" textLength="71" lengthAdjust="spacingAndGlyphs">PANHANDLE</text><text x="815" y="534.1" font-size="11.5" text-anchor="middle" fill="#93a6b4" font-weight="bold" textLength="83" lengthAdjust="spacingAndGlyphs">HAYES VALLEY</text><text x="737" y="560.6" font-size="14" text-anchor="middle" fill="#93a6b4" font-weight="bold" textLength="70" lengthAdjust="spacingAndGlyphs" transform="rotate(-9 737 556)">Fell Street</text><text x="738" y="578.6" font-size="14" text-anchor="middle" fill="#93a6b4" font-weight="bold" textLength="72" lengthAdjust="spacingAndGlyphs" transform="rotate(-9 738 574)">Oak Street</text><text x="543" y="592.6" font-size="14" text-anchor="middle" fill="#93a6b4" font-weight="bold" textLength="70" lengthAdjust="spacingAndGlyphs" transform="rotate(-9 543 588)">Fell Street</text><text x="568" y="606.6" font-size="14" text-anchor="middle" fill="#93a6b4" font-weight="bold" textLength="72" lengthAdjust="spacingAndGlyphs" transform="rotate(-9 568 602)">Oak Street</text><text x="845" y="421.6" font-size="14" text-anchor="middle" fill="#93a6b4" font-weight="bold" textLength="113" lengthAdjust="spacingAndGlyphs" transform="rotate(80 845 417)">Van Ness Avenue</text>
<text x="860" y="495.7" font-size="23.5" text-anchor="middle" fill="#93a6b4" font-weight="bold" textLength="207" lengthAdjust="spacingAndGlyphs">SAN FRANCISCO</text>
</g>
</svg>
<div class="abs" style="left:348.4px;top:390.3px;width:40.3px;height:77.7px;background:#fff;border:2px solid #b3b3b3;border-radius:5px"></div>
<div class="abs" style="left:350.4px;top:428.7px;width:36.3px;height:1px;background:#cfcfcf"></div>
<div class="abs" style="left:361.9px;top:409.3px;width:13.8px;height:2.6px;background:#000"></div>
<div class="abs" style="left:367.5px;top:403.2px;width:2.6px;height:14.6px;background:#000"></div>
<div class="abs" style="left:361.9px;top:446.7px;width:13.8px;height:2.6px;background:#000"></div>
<div class="abs" style="left:974.5px;width:600px;text-align:center;top:569.30px;font-size:15px;line-height:15px;color:#222;font-weight:bold;white-space:nowrap;">Supermarket</div>
<div class="abs" style="left:1267.25px;top:586.5px;width:37.5px;height:37px;border-radius:50%;background:#fd4b0b"></div>
<svg class="abs" style="left:1275px;top:594px;width:22px;height:22px" viewBox="0 0 24 24"><path fill="#fff" fill-rule="nonzero" d="M15.55 13c.75 0 1.41-.41 1.75-1.03l3.58-6.49c.37-.66-.11-1.48-.87-1.48H5.21l-.94-2H1v2h2l3.6 7.59-1.35 2.44C4.52 15.37 5.48 17 7 17h12v-2H7l1.1-2h7.45zM6.16 6h12.15l-2.76 5H8.53L6.16 6zM7 18c-1.1 0-1.99.9-1.99 2S5.9 22 7 22s2-.9 2-2-.9-2-2-2zm10 0c-1.1 0-1.99.9-1.99 2s.89 2 1.99 2 2-.9 2-2-.9-2-2-2z"/></svg>
<div class="abs" style="left:151px;width:600px;text-align:center;top:753.30px;font-size:15px;line-height:15px;color:#222;font-weight:bold;white-space:nowrap;">Supermarket S2</div>
<div class="abs" style="left:432.25px;top:770.0px;width:37.5px;height:37px;border-radius:50%;background:#fd4b0b"></div>
<svg class="abs" style="left:440px;top:777.5px;width:22px;height:22px" viewBox="0 0 24 24"><path fill="#fff" fill-rule="nonzero" d="M15.55 13c.75 0 1.41-.41 1.75-1.03l3.58-6.49c.37-.66-.11-1.48-.87-1.48H5.21l-.94-2H1v2h2l3.6 7.59-1.35 2.44C4.52 15.37 5.48 17 7 17h12v-2H7l1.1-2h7.45zM6.16 6h12.15l-2.76 5H8.53L6.16 6zM7 18c-1.1 0-1.99.9-1.99 2S5.9 22 7 22s2-.9 2-2-.9-2-2-2zm10 0c-1.1 0-1.99.9-1.99 2s.89 2 1.99 2 2-.9 2-2-.9-2-2-2z"/></svg>
<div class="abs" style="left:816.5px;width:600px;text-align:center;top:813.30px;font-size:15px;line-height:15px;color:#222;font-weight:bold;white-space:nowrap;">Supermarket S1</div>
<div class="abs" style="left:1098.75px;top:830.5px;width:37.5px;height:37px;border-radius:50%;background:#fd4b0b"></div>
<svg class="abs" style="left:1106.5px;top:838px;width:22px;height:22px" viewBox="0 0 24 24"><path fill="#fff" fill-rule="nonzero" d="M15.55 13c.75 0 1.41-.41 1.75-1.03l3.58-6.49c.37-.66-.11-1.48-.87-1.48H5.21l-.94-2H1v2h2l3.6 7.59-1.35 2.44C4.52 15.37 5.48 17 7 17h12v-2H7l1.1-2h7.45zM6.16 6h12.15l-2.76 5H8.53L6.16 6zM7 18c-1.1 0-1.99.9-1.99 2S5.9 22 7 22s2-.9 2-2-.9-2-2-2zm10 0c-1.1 0-1.99.9-1.99 2s.89 2 1.99 2 2-.9 2-2-.9-2-2-2z"/></svg>
<div class="abs" style="left:961px;top:1040px;width:361px;height:18px;background:rgba(255,255,255,.8)"></div>
<div class="abs" style="left:966px;top:1045px;width:15px;height:5px;background:#0057b7"></div><div class="abs" style="left:966px;top:1050px;width:15px;height:5px;background:#ffd500"></div>
<div class="abs" style="left:984.20px;top:1042.30px;font-size:15px;line-height:15px;color:#333;font-weight:normal;white-space:nowrap;"><span style="color:#0078a8">Leaflet</span> | © <span style="color:#0078a8">OpenStreetMap</span> contributors © <span style="color:#0078a8">CARTO</span></div>
<div class="abs" style="left:1369.60px;top:175.63px;font-size:29.5px;line-height:29.5px;color:#1a1a1a;font-weight:bold;white-space:nowrap;">Supermarkets</div>
<div class="abs" style="left:1833.2px;top:179.1px;width:5.1px;height:14.4px;background:#1c1c1c"></div><div class="abs" style="left:1839.8px;top:179.1px;width:5.1px;height:14.4px;background:#1c1c1c"></div><div class="abs" style="left:1846.4px;top:179.1px;width:5.1px;height:14.4px;background:#1c1c1c"></div>
<svg class="abs" style="left:1874.4px;top:176.1px;width:16.6px;height:20.8px" viewBox="0 0 16.6 20.8"><path d="M2.2 0H10L16.6 6.6V18.6A2.2 2.2 0 0 1 14.4 20.8H2.2A2.2 2.2 0 0 1 0 18.6V2.2A2.2 2.2 0 0 1 2.2 0Z" fill="#1c1c1c"/><path d="M8.9 1.4V7.7H15.1Z" fill="#fff"/><path d="M5.6 10.6H12.6V17.6L10.2 15.2L6.2 19.2L4.2 17.2L8.2 13.2Z" fill="#fff"/></svg>
<div class="abs" style="left:1895.4px;top:240px;width:6.4px;height:276px;background:#d0d0d0"></div>
<div class="abs" style="left:1365.00px;top:267.61px;font-size:17px;line-height:17px;color:#757575;font-weight:bold;white-space:nowrap;">Name</div>
<div class="abs" style="left:1351px;top:310.4px;width:544px;height:1px;background:#e0e0e0"></div>
<div class="abs" style="left:1351px;top:386.6px;width:544px;height:1px;background:#e0e0e0"></div>
<div class="abs" style="left:1351px;top:462.4px;width:544px;height:1px;background:#e0e0e0"></div>
<div class="abs" style="left:1351px;top:528.3px;width:544px;height:1px;background:#e0e0e0"></div>
<div class="abs" style="left:1365.00px;top:327.66px;font-size:16px;line-height:16px;color:#333;font-weight:normal;white-space:nowrap;">Supermarket</div>
<svg class="abs" style="left:1830px;top:329.0px;width:40px;height:40px" viewBox="0 0 40 40"><g fill="none" stroke="#6b6b6b" stroke-width="1.8" stroke-linecap="round" stroke-linejoin="round"><path d="M6.3 8.7H9.2L15 19.5H25.5L29.8 10.7"/><path d="M15 19.5L12.6 24.6H28.5"/><path d="M15.5 12.3H24M20.2 8.3L24.3 12.3L20.2 16.3"/></g><circle cx="13.9" cy="29.8" r="2.4" fill="#6b6b6b"/><circle cx="26.5" cy="29.8" r="2.4" fill="#6b6b6b"/></svg>
<div class="abs" style="left:1365.00px;top:404.46px;font-size:16px;line-height:16px;color:#333;font-weight:normal;white-space:nowrap;">Supermarket</div>
<div class="abs" style="left:1365.00px;top:428.86px;font-size:16px;line-height:16px;color:#333;font-weight:normal;white-space:nowrap;">S2</div>
<div class="abs" style="left:1478.60px;top:391.46px;font-size:16px;line-height:16px;color:#333;font-weight:normal;white-space:nowrap;">360 Clement St, San</div>
<div class="abs" style="left:1478.60px;top:416.31px;font-size:16px;line-height:16px;color:#333;font-weight:normal;white-space:nowrap;">Francisco, CA 94118,</div>
<div class="abs" style="left:1478.60px;top:441.16px;font-size:16px;line-height:16px;color:#333;font-weight:normal;white-space:nowrap;">United States</div>
<div class="abs" style="left:1653.9px;top:415.8px;width:18.3px;height:18.3px;border-radius:50%;background:#fd4b0b"></div>
<div class="abs" style="left:1686.90px;top:416.16px;font-size:16px;line-height:16px;color:#333;font-weight:normal;white-space:nowrap;">Critical</div>
<svg class="abs" style="left:1830px;top:404.9px;width:40px;height:40px" viewBox="0 0 40 40"><g fill="none" stroke="#6b6b6b" stroke-width="1.8" stroke-linecap="round" stroke-linejoin="round"><path d="M6.3 8.7H9.2L15 19.5H25.5L29.8 10.7"/><path d="M15 19.5L12.6 24.6H28.5"/><path d="M15.5 12.3H24M20.2 8.3L24.3 12.3L20.2 16.3"/></g><circle cx="13.9" cy="29.8" r="2.4" fill="#6b6b6b"/><circle cx="26.5" cy="29.8" r="2.4" fill="#6b6b6b"/></svg>
<div class="abs" style="left:1365.00px;top:480.36px;font-size:16px;line-height:16px;color:#333;font-weight:normal;white-space:nowrap;">Supermarket</div>
<div class="abs" style="left:1365.00px;top:505.26px;font-size:16px;line-height:16px;color:#333;font-weight:normal;white-space:nowrap;">S3</div>
<div class="abs" style="left:1478.60px;top:467.16px;font-size:16px;line-height:16px;color:#333;font-weight:normal;white-space:nowrap;">1165 Powell St, San</div>
<div class="abs" style="left:1478.60px;top:492.01px;font-size:16px;line-height:16px;color:#333;font-weight:normal;white-space:nowrap;">Francisco, CA 94108,</div>
<div class="abs" style="left:1478.60px;top:516.86px;font-size:16px;line-height:16px;color:#333;font-weight:normal;white-space:nowrap;">United States</div>
<div class="abs" style="left:1653.9px;top:491.6px;width:18.3px;height:18.3px;border-radius:50%;background:#fd4b0b"></div>
<div class="abs" style="left:1686.90px;top:492.06px;font-size:16px;line-height:16px;color:#333;font-weight:normal;white-space:nowrap;">Critical</div>
<svg class="abs" style="left:1830px;top:480.7px;width:40px;height:40px" viewBox="0 0 40 40"><g fill="none" stroke="#6b6b6b" stroke-width="1.8" stroke-linecap="round" stroke-linejoin="round"><path d="M6.3 8.7H9.2L15 19.5H25.5L29.8 10.7"/><path d="M15 19.5L12.6 24.6H28.5"/><path d="M15.5 12.3H24M20.2 8.3L24.3 12.3L20.2 16.3"/></g><circle cx="13.9" cy="29.8" r="2.4" fill="#6b6b6b"/><circle cx="26.5" cy="29.8" r="2.4" fill="#6b6b6b"/></svg>
<div class="abs" style="left:1351px;top:529px;width:544px;height:9px;background:#fff"></div>
<div class="abs" style="left:1543.00px;top:555.16px;font-size:16px;line-height:16px;color:#757575;font-weight:normal;white-space:nowrap;">1 – 3 of 3</div>
<svg class="abs" style="left:1667.1px;top:548.5px;width:30.2px;height:30.2px" viewBox="0 0 24 24"><path fill="#c7c7c7" fill-rule="nonzero" d="M18.41 16.59L13.82 12l4.59-4.59L17 6l-6 6 6 6zM6 6h2v12H6z"/></svg>
<svg class="abs" style="left:1727.9px;top:548.5px;width:30.2px;height:30.2px" viewBox="0 0 24 24"><path fill="#c7c7c7" fill-rule="nonzero" d="M15.41 7.41L14 6l-6 6 6 6 1.41-1.41L10.83 12z"/></svg>
<svg class="abs" style="left:1786.8px;top:548.5px;width:30.2px;height:30.2px" viewBox="0 0 24 24"><path fill="#c7c7c7" fill-rule="nonzero" d="M10 6L8.59 7.41 13.17 12l-4.58 4.59L10 18l6-6z"/></svg>
<svg class="abs" style="left:1846.6px;top:548.5px;width:30.2px;height:30.2px" viewBox="0 0 24 24"><path fill="#c7c7c7" fill-rule="nonzero" d="M5.59 7.41L10.18 12l-4.59 4.59L7 18l6-6-6-6zM16 6h2v12h-2z"/></svg>
<div class="abs" style="left:1351px;top:611px;width:557px;height:1px;background:#e0e0e0"></div>
<div class="abs" style="left:1369.10px;top:638.93px;font-size:29.5px;line-height:29.5px;color:#1a1a1a;font-weight:bold;white-space:nowrap;">Alarms</div>
<svg class="abs" style="left:1790px;top:638px;width:25px;height:25px" viewBox="0 0 24 24"><path fill="#1a1a1a" fill-rule="nonzero" d="M15.5 14h-.79l-.28-.27C15.41 12.59 16 11.11 16 9.5 16 5.91 13.09 3 9.5 3S3 5.91 3 9.5 5.91 16 9.5 16c1.61 0 3.09-.59 4.23-1.57l.27.28v.79l5 4.99L20.49 19l-4.99-5zm-6 0C7.01 14 5 11.99 5 9.5S7.01 5 9.5 5 14 7.01 14 9.5 11.99 14 9.5 14z"/></svg>
<div class="abs" style="left:1833.2px;top:643.2px;width:5.1px;height:14.4px;background:#1c1c1c"></div><div class="abs" style="left:1839.8px;top:643.2px;width:5.1px;height:14.4px;background:#1c1c1c"></div><div class="abs" style="left:1846.4px;top:643.2px;width:5.1px;height:14.4px;background:#1c1c1c"></div>
<svg class="abs" style="left:1874.4px;top:640.1px;width:16.6px;height:20.8px" viewBox="0 0 16.6 20.8"><path d="M2.2 0H10L16.6 6.6V18.6A2.2 2.2 0 0 1 14.4 20.8H2.2A2.2 2.2 0 0 1 0 18.6V2.2A2.2 2.2 0 0 1 2.2 0Z" fill="#1c1c1c"/><path d="M8.9 1.4V7.7H15.1Z" fill="#fff"/><path d="M5.6 10.6H12.6V17.6L10.2 15.2L6.2 19.2L4.2 17.2L8.2 13.2Z" fill="#fff"/></svg>
<div class="abs" style="left:1357.4px;top:705.4px;width:544px;height:31.3px;border:1px solid #e4e4e4;border-radius:5px"></div>
<svg class="abs" style="left:1358px;top:706px;width:30px;height:30px" viewBox="0 0 24 24"><path fill="#2a2a2a" fill-rule="nonzero" d="M11.99 2C6.47 2 2 6.48 2 12s4.47 10 9.99 10C17.52 22 22 17.52 22 12S17.52 2 11.99 2zM12 20c-4.42 0-8-3.58-8-8s3.58-8 8-8 8 3.58 8 8-3.58 8-8 8zm.5-13H11v6l5.25 3.15.75-1.23-4.5-2.67z"/></svg>
<div class="abs" style="left:1391.90px;top:712.21px;font-size:17px;line-height:17px;color:#555;font-weight:normal;white-space:nowrap;">Realtime - last 7 days</div>
<div class="abs" style="left:1380.1px;top:761.2px;width:22px;height:22.3px;border:2.2px solid #6e6e6e;border-radius:2px"></div>
<div class="abs" style="left:1420.60px;top:764.85px;font-size:16.6px;line-height:16.6px;color:#757575;font-weight:bold;white-space:nowrap;">Start time</div>
<svg class="abs" style="left:1503.6px;top:761.8px;width:23.5px;height:23.5px" viewBox="0 0 24 24"><path fill="#757575" fill-rule="nonzero" d="M20 12l-1.41-1.41L13 16.17V4h-2v12.17l-5.58-5.59L4 12l8 8 8-8z"/></svg>
<div class="abs" style="left:1533.30px;top:765.36px;font-size:16px;line-height:16px;color:#757575;font-weight:bold;white-space:nowrap;">Originator</div>
<div class="abs" style="left:1647.10px;top:764.93px;font-size:16.5px;line-height:16.5px;color:#757575;font-weight:bold;white-space:nowrap;">Type</div>
<div class="abs" style="left:1751.50px;top:765.36px;font-size:16px;line-height:16px;color:#757575;font-weight:bold;white-space:nowrap;">Severity</div>
<div class="abs" style="left:1848.90px;top:764.93px;font-size:16.5px;line-height:16.5px;color:#757575;font-weight:bold;white-space:nowrap;">Status</div>
<div class="abs" style="left:1351px;top:807.6px;width:544px;height:1px;background:#e0e0e0"></div>
<div class="abs" style="left:1351px;top:872.3px;width:544px;height:1px;background:#e0e0e0"></div>
<div class="abs" style="left:1351px;top:948.4px;width:544px;height:1px;background:#e0e0e0"></div>
<div class="abs" style="left:1351px;top:1024.6px;width:544px;height:1px;background:#e0e0e0"></div>
<div class="abs" style="left:1380.1px;top:829.4px;width:22px;height:22.3px;border:2.2px solid #6e6e6e;border-radius:2px"></div>
<div class="abs" style="left:1420.60px;top:819.36px;font-size:16px;line-height:16px;color:#333;font-weight:normal;white-space:nowrap;">2023-08-10</div>
<div class="abs" style="left:1420.60px;top:844.06px;font-size:16px;line-height:16px;color:#333;font-weight:normal;white-space:nowrap;">13:56:22</div>
<div class="abs" style="left:1534.30px;top:819.36px;font-size:16px;line-height:16px;color:#333;font-weight:normal;white-space:nowrap;">Motion</div>
<div class="abs" style="left:1534.30px;top:844.06px;font-size:16px;line-height:16px;color:#333;font-weight:normal;white-space:nowrap;">Sensor 1</div>
<div class="abs" style="left:1647.10px;top:831.16px;font-size:16px;line-height:16px;color:#333;font-weight:normal;white-space:nowrap;">Low Battery</div>
<div class="abs" style="left:1751.50px;top:831.16px;font-size:16px;line-height:16px;color:#ffa600;font-weight:bold;white-space:nowrap;">Major</div>
<div class="abs" style="left:1848.90px;top:818.96px;font-size:16px;line-height:16px;color:#333;font-weight:normal;white-space:nowrap;">Active</div>
<div class="abs" style="left:1848.90px;top:843.66px;font-size:16px;line-height:16px;color:#333;font-weight:normal;white-space:nowrap;">Unack</div>
<div class="abs" style="left:1380.1px;top:899.5px;width:22px;height:22.3px;border:2.2px solid #6e6e6e;border-radius:2px"></div>
<div class="abs" style="left:1420.60px;top:888.86px;font-size:16px;line-height:16px;color:#333;font-weight:normal;white-space:nowrap;">2023-08-09</div>
<div class="abs" style="left:1420.60px;top:913.96px;font-size:16px;line-height:16px;color:#333;font-weight:normal;white-space:nowrap;">21:16:22</div>
<div class="abs" style="left:1534.30px;top:902.26px;font-size:16px;line-height:16px;color:#333;font-weight:normal;white-space:nowrap;">Freezer 1</div>
<div class="abs" style="left:1647.10px;top:877.26px;font-size:16px;line-height:16px;color:#333;font-weight:normal;white-space:nowrap;">High</div>
<div class="abs" style="left:1647.10px;top:902.26px;font-size:16px;line-height:16px;color:#333;font-weight:normal;white-space:nowrap;">Temperature</div>
<div class="abs" style="left:1647.10px;top:927.16px;font-size:16px;line-height:16px;color:#333;font-weight:normal;white-space:nowrap;">Alarm</div>
<div class="abs" style="left:1751.50px;top:902.26px;font-size:16px;line-height:16px;color:#ffa600;font-weight:bold;white-space:nowrap;">Major</div>
<div class="abs" style="left:1848.90px;top:889.06px;font-size:16px;line-height:16px;color:#333;font-weight:normal;white-space:nowrap;">Active</div>
<div class="abs" style="left:1848.90px;top:914.06px;font-size:16px;line-height:16px;color:#333;font-weight:normal;white-space:nowrap;">Unack</div>
<div class="abs" style="left:1380.1px;top:975.3px;width:22px;height:22.3px;border:2.2px solid #6e6e6e;border-radius:2px"></div>
<div class="abs" style="left:1420.60px;top:965.06px;font-size:16px;line-height:16px;color:#333;font-weight:normal;white-space:nowrap;">2023-08-09</div>
<div class="abs" style="left:1420.60px;top:989.96px;font-size:16px;line-height:16px;color:#333;font-weight:normal;white-space:nowrap;">09:16:22</div>
<div class="abs" style="left:1534.30px;top:965.06px;font-size:16px;line-height:16px;color:#333;font-weight:normal;white-space:nowrap;">Chiller</div>
<div class="abs" style="left:1534.30px;top:989.96px;font-size:16px;line-height:16px;color:#333;font-weight:normal;white-space:nowrap;">378876</div>
<div class="abs" style="left:1647.10px;top:953.06px;font-size:16px;line-height:16px;color:#333;font-weight:normal;white-space:nowrap;">High</div>
<div class="abs" style="left:1647.10px;top:978.06px;font-size:16px;line-height:16px;color:#333;font-weight:normal;white-space:nowrap;">Temperature</div>
<div class="abs" style="left:1647.10px;top:1002.96px;font-size:16px;line-height:16px;color:#333;font-weight:normal;white-space:nowrap;">Alarm</div>
<div class="abs" style="left:1751.50px;top:978.06px;font-size:16px;line-height:16px;color:#ff0000;font-weight:bold;white-space:nowrap;">Critical</div>
<div class="abs" style="left:1848.90px;top:965.06px;font-size:16px;line-height:16px;color:#333;font-weight:normal;white-space:nowrap;">Active</div>
<div class="abs" style="left:1848.90px;top:989.96px;font-size:16px;line-height:16px;color:#333;font-weight:normal;white-space:nowrap;">Unack</div>
<div class="abs" style="left:1380.1px;top:1051.5px;width:22px;height:4px;border:2.2px solid #6e6e6e;border-bottom:none;border-radius:2px 2px 0 0"></div>
<div class="abs" style="left:1420.60px;top:1040.46px;font-size:16px;line-height:16px;color:#333;font-weight:normal;white-space:nowrap;">2023-08-09</div>
<div class="abs" style="left:1647.10px;top:1029.26px;font-size:16px;line-height:16px;color:#333;font-weight:normal;white-space:nowrap;">High</div>
<div class="abs" style="left:1848.90px;top:1041.06px;font-size:16px;line-height:16px;color:#333;font-weight:normal;white-space:nowrap;">Active</div>
<div class="abs" style="left:1347px;top:1055.5px;width:561px;height:12.5px;background:#fff;border-radius:0 0 9px 9px"></div>
<div class="abs" style="left:1354px;top:1056.2px;width:384px;height:6.8px;background:#d0d0d0;border-radius:0 0 0 6px"></div>
<div class="abs" style="left:1895px;top:738px;width:12px;height:318px;background:#fff"></div>
<div class="abs" style="left:1895.2px;top:737.6px;width:6.8px;height:231px;background:#d0d0d0"></div>
<div class="abs" style="left:0px;top:180px;width:316px;height:55.6px;border:3px solid #fbc43d;border-radius:10px;box-shadow:0 0 2px 1px rgba(251,196,61,.35)"></div>
<svg class="abs" style="left:300px;top:200px;width:72px;height:25px" viewBox="0 0 72 25"><path d="M7.8 12.2H70" stroke="#fbc43d" stroke-width="3" stroke-dasharray="20 5.5"/><circle cx="13.9" cy="12.2" r="5.3" fill="#fbc43d"/></svg>
<div class="abs" style="left:369.7px;top:193.7px;width:380.9px;height:39.6px;background:#fdf0e0;border:3px solid #fbc43d;border-radius:9px;box-shadow:0 0 2px 1px rgba(251,196,61,.35)"></div>
<div class="abs" style="left:376.90px;top:199.10px;font-size:28px;line-height:28px;color:#000;font-weight:normal;white-space:nowrap;">Go to the "Dashboards" page</div>
<div class="abs" style="left:395.8px;top:161.3px;width:29.2px;height:34.5px;background:#fff;border:3px solid #fbc43d;border-radius:9px;box-shadow:0 0 2px 1px rgba(251,196,61,.35)"></div>
<div class="abs" style="left:110.39999999999998px;width:600px;text-align:center;top:165.87px;font-size:26.5px;line-height:26.5px;color:#000;font-weight:normal;white-space:nowrap;">1</div>
<svg class="abs" style="left:935px;top:22px;width:80px;height:52px" viewBox="0 0 80 52">
<path d="M7.2 22.6L37 7.5Q38.8 8.8 37.6 12.4L28.9 18.5C38 19.5 50 24 58 33C62 38 65.5 43 67.6 47.5L63.4 47.5C60 41 56 36.5 51 33.5C45 30 38 28.5 29.9 27.4L32.6 30.8Q33.6 34.6 30.5 37.6Z" fill="#fbc43d"/>
<path d="M7.2 22.6L30.5 37.6Q32 36 32.4 33.5Q20 29 7.2 22.6Z" fill="#e0a62c" opacity=".8"/>
</svg>
<div class="abs" style="left:979px;top:69.3px;width:251.6px;height:41.3px;background:#fdf0e0;border:3px solid #fbc43d;border-radius:9px;box-shadow:0 0 2px 1px rgba(251,196,61,.35)"></div>
<div class="abs" style="left:986.50px;top:76.40px;font-size:28px;line-height:28px;color:#000;font-weight:normal;white-space:nowrap;">Open a dashboard</div>
<div class="abs" style="left:1012px;top:37px;width:29.3px;height:35.0px;background:#fff;border:3px solid #fbc43d;border-radius:9px;box-shadow:0 0 2px 1px rgba(251,196,61,.35)"></div>
<div class="abs" style="left:726.5999999999999px;width:600px;text-align:center;top:42.57px;font-size:26.5px;line-height:26.5px;color:#000;font-weight:normal;white-space:nowrap;">2</div>
<div class="abs" style="left:1764.4px;top:86.3px;width:51.3px;height:48px;border:3px solid #fbc43d;border-radius:50%"></div>
<div class="abs" style="left:1475px;top:138.3px;width:347.7px;height:265px;background:#fff;border:3px solid #fbc43d;border-radius:10px;box-shadow:0 3px 8px rgba(0,0,0,.22),0 0 2px 1px rgba(251,196,61,.35)"></div>
<svg class="abs" style="left:1503.2px;top:168.1px;width:20px;height:25px" viewBox="0 0 20 25"><path d="M2.2 0H12.5L20 7.5V22.8A2.2 2.2 0 0 1 17.8 25H2.2A2.2 2.2 0 0 1 0 22.8V2.2A2.2 2.2 0 0 1 2.2 0z" fill="#1e1e1e"/><path d="M12.5 1.5V7.5H18.5z" fill="#fff"/><path d="M5.5 20.5 C 8 16, 10 10, 9.5 8 C 9 6.5, 8 8, 9 11 C 10 14, 13 18, 16 18.5 C 18 18.8, 18 17.5, 16 17 C 12 16.5, 7 18, 5 21" stroke="#fff" stroke-width="1.1" fill="none"/></svg>
<div class="abs" style="left:1547.60px;top:170.57px;font-size:20px;line-height:20px;color:#1e1e1e;font-weight:normal;white-space:nowrap;letter-spacing:0.42px">Export as PDF</div>
<svg class="abs" style="left:1503.2px;top:228.2px;width:20px;height:25px" viewBox="0 0 20 25"><path d="M2.2 0H12.5L20 7.5V22.8A2.2 2.2 0 0 1 17.8 25H2.2A2.2 2.2 0 0 1 0 22.8V2.2A2.2 2.2 0 0 1 2.2 0z" fill="#1e1e1e"/><path d="M12.5 1.5V7.5H18.5z" fill="#fff"/><circle cx="5" cy="11" r="2" fill="#fff"/><path d="M2.5 22.5 V 19.5 L 8 14.5 L 11.5 17 L 17.5 11.5 V 22.5z" fill="#fff"/></svg>
<div class="abs" style="left:1547.60px;top:230.67px;font-size:20px;line-height:20px;color:#1e1e1e;font-weight:normal;white-space:nowrap;letter-spacing:0.42px">Export as PNG</div>
<svg class="abs" style="left:1503.2px;top:288.3px;width:20px;height:25px" viewBox="0 0 20 25"><path d="M2.2 0H12.5L20 7.5V22.8A2.2 2.2 0 0 1 17.8 25H2.2A2.2 2.2 0 0 1 0 22.8V2.2A2.2 2.2 0 0 1 2.2 0z" fill="#1e1e1e"/><path d="M12.5 1.5V7.5H18.5z" fill="#fff"/><circle cx="5" cy="11" r="2" fill="#fff"/><path d="M2.5 22.5 V 19.5 L 8 14.5 L 11.5 17 L 17.5 11.5 V 22.5z" fill="#fff"/></svg>
<div class="abs" style="left:1547.60px;top:290.77px;font-size:20px;line-height:20px;color:#1e1e1e;font-weight:normal;white-space:nowrap;letter-spacing:0.42px">Export as JPEG</div>
<svg class="abs" style="left:1503.2px;top:348.4px;width:20px;height:25px" viewBox="0 0 20 25"><path d="M2.2 0H12.5L20 7.5V22.8A2.2 2.2 0 0 1 17.8 25H2.2A2.2 2.2 0 0 1 0 22.8V2.2A2.2 2.2 0 0 1 2.2 0z" fill="#1e1e1e"/><path d="M12.5 1.5V7.5H18.5z" fill="#fff"/><path d="M8.5 13 L5 16.5 L8.5 20 M11.5 13 L15 16.5 L11.5 20" stroke="#fff" stroke-width="2" fill="none"/></svg>
<div class="abs" style="left:1547.60px;top:350.77px;font-size:20px;line-height:20px;color:#1e1e1e;font-weight:normal;white-space:nowrap;letter-spacing:0.42px">Export JSON configuration</div>
<div class="abs" style="left:1483.3px;top:331.7px;width:330.7px;height:58.3px;border:3px solid #fbc43d;border-radius:10px;box-shadow:0 0 2px 1px rgba(251,196,61,.35)"></div>
<svg class="abs" style="left:1430px;top:352px;width:64px;height:23px" viewBox="0 0 64 23"><path d="M3.2 11.5H56" stroke="#fbc43d" stroke-width="3" stroke-dasharray="7.8 5.2 20.7 5.2 20"/><circle cx="55.8" cy="11.5" r="5.3" fill="#fbc43d"/></svg>
<div class="abs" style="left:979.5px;top:343.7px;width:453.1px;height:40.6px;background:#fdf0e0;border:3px solid #fbc43d;border-radius:9px;box-shadow:0 0 2px 1px rgba(251,196,61,.35)"></div>
<div class="abs" style="left:986.50px;top:349.70px;font-size:28px;line-height:28px;color:#000;font-weight:normal;white-space:nowrap;">Select "Export JSON configuration"</div>
<div class="abs" style="left:1000.6px;top:311.1px;width:28.4px;height:33.9px;background:#fff;border:3px solid #fbc43d;border-radius:9px;box-shadow:0 0 2px 1px rgba(251,196,61,.35)"></div>
<div class="abs" style="left:714.8px;width:600px;text-align:center;top:316.07px;font-size:26.5px;line-height:26.5px;color:#000;font-weight:normal;white-space:nowrap;">4</div>
<div class="abs" style="left:1801.7px;top:62.7px;width:28.3px;height:34.0px;background:#fff;border:3px solid #fbc43d;border-radius:9px;box-shadow:0 0 2px 1px rgba(251,196,61,.35)"></div>
<div class="abs" style="left:1515.9px;width:600px;text-align:center;top:67.57px;font-size:26.5px;line-height:26.5px;color:#000;font-weight:normal;white-space:nowrap;">3</div>
<svg class="abs" style="left:1781px;top:122.5px;width:18px;height:28px" viewBox="0 0 18 28"><path d="M5 2 Q5 0.3 6.5 0.3 Q8 0.3 8 2 V6.5 H10.5 V7.5 H13 V8.5 H15 V9.8 L16.5 10.4 V19.5 L15.5 20.5 V21.8 H5.5 V20.8 L1.2 13.5 Q0.3 11.5 0.8 9.3 H3.2 L5 11.2z" fill="#fff" stroke="#000" stroke-width="1.15" stroke-linejoin="round"/><path d="M8 6.5V10.3M10.5 7.5V10.6M13 8.5V11.2" stroke="#000" stroke-width="1"/><rect x="5.3" y="21.6" width="10.3" height="5.8" fill="#fbc43d" stroke="#000" stroke-width="1.1"/><rect x="11.5" y="23.2" width="2.2" height="2" fill="#000"/></svg>
<svg class="abs" style="left:1641px;top:371px;width:18px;height:28px" viewBox="0 0 18 28"><path d="M5 2 Q5 0.3 6.5 0.3 Q8 0.3 8 2 V6.5 H10.5 V7.5 H13 V8.5 H15 V9.8 L16.5 10.4 V19.5 L15.5 20.5 V21.8 H5.5 V20.8 L1.2 13.5 Q0.3 11.5 0.8 9.3 H3.2 L5 11.2z" fill="#fff" stroke="#000" stroke-width="1.15" stroke-linejoin="round"/><path d="M8 6.5V10.3M10.5 7.5V10.6M13 8.5V11.2" stroke="#000" stroke-width="1"/><rect x="5.3" y="21.6" width="10.3" height="5.8" fill="#fbc43d" stroke="#000" stroke-width="1.1"/><rect x="11.5" y="23.2" width="2.2" height="2" fill="#000"/></svg>
</body></html>
